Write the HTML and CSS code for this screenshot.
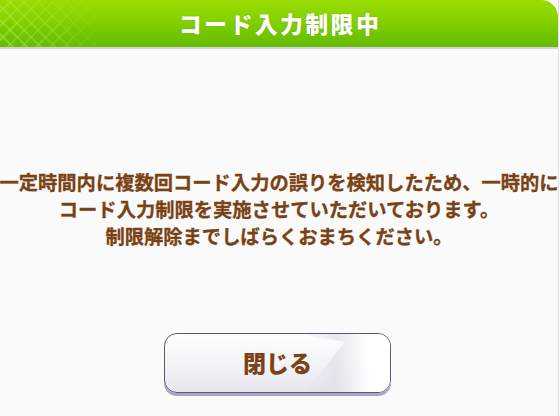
FILE: index.html
```html
<!DOCTYPE html>
<html lang="ja">
<head>
<meta charset="utf-8">
<link rel="stylesheet" href="styles.css">
</head>
<body>
<div class="panel">
  <header class="head">
    <div class="lattice"></div>
    <h1 class="title">コード入力制限中</h1>
  </header>
  <main class="content">
    <p class="message">一定時間内に複数回コード入力の誤りを検知したため、一時的に<br>コード入力制限を実施させていただいております。<br>制限解除までしばらくおまちください。</p>
    <div class="actions">
      <button class="btn"><span class="btn-shine"></span><span class="btn-label">閉じる</span></button>
    </div>
  </main>
</div>
</body>
</html>
```
FILE: styles.css
```css
html, body {
  margin: 0;
  padding: 0;
  background: #fafafa;
  font-family: "Noto Sans CJK JP", "Noto Sans", sans-serif;
}
.panel {
  width: 559px;
  height: 416px;
  box-sizing: border-box;
  border-right: 1px solid #e2e2e2;
  display: flex;
  flex-direction: column;
}
.head {
  position: relative;
  height: 47px;
  border-bottom: 2px solid #d4d4d4;
  border-top-right-radius: 17px;
  background: linear-gradient(to bottom, #99dd02 0%, #84d000 45%, #62bb04 100%);
  display: flex;
  align-items: center;
  justify-content: center;
  overflow: hidden;
}
.lattice {
  position: absolute;
  left: 0;
  top: 0;
  width: 105px;
  height: 47px;
  background:
    repeating-linear-gradient(45deg, transparent 0 8px, rgba(170, 230, 60, 0.5) 8px 10px),
    repeating-linear-gradient(-45deg, transparent 0 8px, rgba(170, 230, 60, 0.5) 8px 10px);
  -webkit-mask-image: linear-gradient(to right, #000 0%, rgba(0,0,0,0.7) 45%, transparent 100%);
  mask-image: linear-gradient(to right, #000 0%, rgba(0,0,0,0.7) 45%, transparent 100%);
}
.title {
  position: relative;
  margin: 0 0 0 2px;
  color: #ffffff;
  font-size: 23px;
  font-weight: 900;
  letter-spacing: 2.3px;
  line-height: 1;
  text-shadow: 0 0 1px rgba(60, 110, 0, 0.5);
}
.content {
  flex: 1;
  display: flex;
  flex-direction: column;
  align-items: center;
}
.message {
  margin: 120px 0 0 0;
  width: 559px;
  text-align: center;
  color: #7a4214;
  font-size: 19.3px;
  font-weight: 700;
  line-height: 27px;
  white-space: nowrap;
  -webkit-text-stroke: 0.3px #7a4214;
}
.actions {
  margin-top: 83px;
  display: flex;
  justify-content: center;
  width: 100%;
}
.btn {
  position: relative;
  width: 227px;
  height: 60px;
  margin-left: -3px;
  border: 1.5px solid #5b5677;
  border-radius: 13px;
  background: linear-gradient(to bottom, #fdfdfe 0%, #f3f2f6 55%, #e7e5ee 100%);
  box-shadow: 0 3px 0 #aaa6bc;
  overflow: hidden;
  padding: 0;
  font-family: inherit;
  display: flex;
  align-items: center;
  justify-content: center;
}
.btn-shine {
  position: absolute;
  top: 0;
  left: 135px;
  width: 90px;
  height: 100%;
  background: linear-gradient(to right, rgba(225, 222, 232, 0.0) 0%, rgba(225, 222, 232, 0.7) 40%, rgba(255,255,255,0.9) 75%, #ffffff 100%);
  clip-path: polygon(0 0, 90px 0, 90px 100%, 5px 100%, 45px 8px);
}
.btn-label {
  position: relative;
  color: #7a4214;
  font-size: 23px;
  font-weight: 900;
  line-height: 1;
  margin-top: -2px;
}
```
